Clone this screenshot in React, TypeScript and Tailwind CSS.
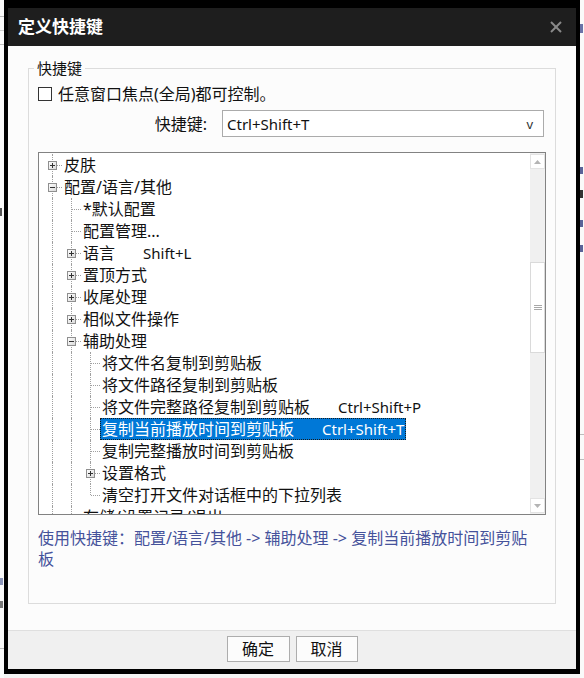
import React from 'react';

type Row = {
  level: number;
  text: string;
  exp?: '+' | '-';
  last?: boolean;
  sc?: string;
  sel?: boolean;
};

const rows: Row[] = [
  { level: 0, text: '皮肤', exp: '+' },
  { level: 0, text: '配置/语言/其他', exp: '-' },
  { level: 1, text: '*默认配置' },
  { level: 1, text: '配置管理...' },
  { level: 1, text: '语言', exp: '+', sc: 'Shift+L' },
  { level: 1, text: '置顶方式', exp: '+' },
  { level: 1, text: '收尾处理', exp: '+' },
  { level: 1, text: '相似文件操作', exp: '+' },
  { level: 1, text: '辅助处理', exp: '-' },
  { level: 2, text: '将文件名复制到剪贴板' },
  { level: 2, text: '将文件路径复制到剪贴板' },
  { level: 2, text: '将文件完整路径复制到剪贴板', sc: 'Ctrl+Shift+P' },
  { level: 2, text: '复制当前播放时间到剪贴板', sc: 'Ctrl+Shift+T', sel: true },
  { level: 2, text: '复制完整播放时间到剪贴板' },
  { level: 2, text: '设置格式', exp: '+' },
  { level: 2, text: '清空打开文件对话框中的下拉列表', last: true },
  { level: 1, text: '存储/设置记录/退出' },
];

function Expander({ kind }: { kind: '+' | '-' }) {
  return (
    <svg
      className="absolute left-[5px] top-[7px]"
      width="9"
      height="9"
      viewBox="0 0 9 9"
    >
      <defs>
        <linearGradient id="expg" x1="0" y1="0" x2="1" y2="1">
          <stop offset="0" stopColor="#ffffff" />
          <stop offset="1" stopColor="#d8d8d8" />
        </linearGradient>
      </defs>
      <rect x="0.5" y="0.5" width="8" height="8" fill="url(#expg)" stroke="#8f8f8f" />
      <line x1="2" y1="4.5" x2="7" y2="4.5" stroke="#333" strokeWidth="1" />
      {kind === '+' && <line x1="4.5" y1="2" x2="4.5" y2="7" stroke="#333" strokeWidth="1" />}
    </svg>
  );
}

function TreeRow({ r }: { r: Row }) {
  const guides = [];
  for (let k = 0; k < r.level; k++) {
    guides.push(
      <div key={k} className="relative h-full w-[19px] shrink-0">
        <div className="absolute left-[9px] top-0 h-full border-l border-dotted border-[#a0a0a0]" />
      </div>
    );
  }
  return (
    <div className="flex h-[22px] items-center whitespace-nowrap">
      {guides}
      <div className="relative h-full w-[19px] shrink-0">
        <div
          className={`absolute left-[9px] top-0 border-l border-dotted border-[#a0a0a0] ${
            r.last ? 'h-[11px]' : 'h-full'
          }`}
        />
        <div className="absolute left-[10px] top-[11px] w-[9px] border-t border-dotted border-[#a0a0a0]" />
        {r.exp && <Expander kind={r.exp} />}
      </div>
      <span
        className={`flex h-[22px] items-center px-[2px] ${
          r.sel
            ? 'bg-[#0078d7] text-white outline-1 outline-dotted outline-[#1a1a1a] -outline-offset-1'
            : 'text-[#111]'
        }`}
      >
        <span>{r.text}</span>
        {r.sc && <span className="ml-[28px] text-[15px]">{r.sc}</span>}
      </span>
    </div>
  );
}

export default function App() {
  return (
    <div className="flex h-[678px] w-[584px] overflow-hidden bg-[#f4f4f4] font-['Noto_Sans','Noto_Sans_CJK_SC',sans-serif]">
      {/* left background strip */}
      <div className="flex h-full w-[4px] shrink-0 flex-col bg-[#fafafa]">
        <div className="mt-[16px] h-px bg-[#bdbdbd]" />
        <div className="mt-[13px] h-px bg-[#cfcfcf]" />
        <div className="mt-[13px] h-px bg-[#bdbdbd]" />
        <div className="mt-[163px] h-[8px] w-[2px] bg-[#555]" />
        <div className="mt-[362px] h-[7px] w-[3px] bg-[#8a94b8]" />
        <div className="mt-[16px] h-[7px] w-[3px] bg-[#777]" />
        <div className="mt-[40px] h-px bg-[#bdbdbd]" />
      </div>

      {/* dialog frame */}
      <div className="flex h-[674px] w-[576px] shrink-0 flex-col bg-black pb-[5px] pl-[4px] pr-[4px] pt-[8px]">
        <div className="flex h-full w-full flex-col">
          {/* title bar */}
          <div className="flex h-[38px] shrink-0 items-center justify-between bg-[#1e1e1e] pl-[10px] pr-[14px]">
            <span className="text-[17px] font-bold leading-[20px] text-white">定义快捷键</span>
            <svg width="12" height="12" viewBox="0 0 12 12">
              <line x1="1" y1="1" x2="11" y2="11" stroke="#8a8a8a" strokeWidth="2" />
              <line x1="11" y1="1" x2="1" y2="11" stroke="#8a8a8a" strokeWidth="2" />
            </svg>
          </div>

          {/* body */}
          <div className="h-[584px] shrink-0 bg-[#fcfcfc] pt-[12px]">
            <fieldset className="mx-[20px] h-[546px] border border-[#dcdcdc]">
              <legend className="ml-[5px] px-[3px] text-[15px] leading-[20px] text-[#111]">快捷键</legend>
              <div className="px-[9px] pt-[6px]">
                {/* checkbox row */}
                <div className="flex h-[20px] items-center">
                  <div className="h-[14px] w-[14px] shrink-0 border border-[#333] bg-white" />
                  <span className="ml-[6px] text-[16px] leading-[20px] text-[#111]">
                    任意窗口焦点(全局)都可控制。
                  </span>
                </div>

                {/* combo row */}
                <div className="mt-[6px] flex h-[27px] items-center">
                  <div className="w-[169px] shrink-0 text-right text-[16px] leading-[20px] text-[#111]">快捷键:</div>
                  <div className="ml-[15px] flex h-[27px] w-[322px] items-center justify-between border border-[#ababab] bg-white pl-[4px] pr-[10px]">
                    <span className="text-[15px] leading-[20px] text-[#111]">Ctrl+Shift+T</span>
                    <span className="text-[13px] leading-[16px] text-[#333]">v</span>
                  </div>
                </div>

                {/* tree */}
                <div className="mt-[15px] flex h-[363px] border border-[#828282] bg-white">
                  <div className="min-w-0 flex-1 overflow-hidden pl-[4px] pt-[1px] text-[16px] leading-[22px]">
                    {rows.map((r, i) => (
                      <TreeRow key={i} r={r} />
                    ))}
                  </div>
                  {/* scrollbar */}
                  <div className="flex w-[15px] shrink-0 flex-col bg-[#f0f0f0] py-[1px]">
                    <div className="flex h-[15px] items-center justify-center border border-[#e3e3e3] bg-white">
                      <svg width="7" height="4" viewBox="0 0 7 4">
                        <polygon points="0,4 3.5,0 7,4" fill="#b4b4b4" />
                      </svg>
                    </div>
                    <div className="flex-1">
                      <div className="mt-[93px] flex h-[91px] items-center justify-center border border-[#dadada] bg-white">
                        <svg width="8" height="5" viewBox="0 0 8 5">
                          <line x1="0" y1="0.5" x2="8" y2="0.5" stroke="#a8a8a8" />
                          <line x1="0" y1="2.5" x2="8" y2="2.5" stroke="#a8a8a8" />
                          <line x1="0" y1="4.5" x2="8" y2="4.5" stroke="#a8a8a8" />
                        </svg>
                      </div>
                    </div>
                    <div className="flex h-[15px] items-center justify-center border border-[#e3e3e3] bg-white">
                      <svg width="7" height="4" viewBox="0 0 7 4">
                        <polygon points="0,0 3.5,4 7,0" fill="#b4b4b4" />
                      </svg>
                    </div>
                  </div>
                </div>

                {/* status */}
                <div className="mt-[13px] text-[16px] leading-[21px] text-[#45529b]">
                  使用快捷键：配置/语言/其他 -&gt; 辅助处理 -&gt; 复制当前播放时间到剪贴
                  <br />板
                </div>
              </div>
            </fieldset>
          </div>

          {/* footer */}
          <div className="flex flex-1 justify-center gap-[6px] border-t border-[#dfdfdf] bg-[#f0f0f0] pt-[5px]">
            <button className="h-[26px] w-[63px] border border-[#adadad] bg-[#fcfcfc] text-[16px] leading-[20px] text-[#111]">
              确定
            </button>
            <button className="h-[26px] w-[62px] border border-[#adadad] bg-[#fcfcfc] text-[16px] leading-[20px] text-[#111]">
              取消
            </button>
          </div>
        </div>
      </div>

      {/* right background strip */}
      <div className="flex h-full w-[4px] shrink-0 flex-col bg-[#fafafa]">
        <div className="mt-[24px] h-[9px] w-[3px] bg-[#6a73a8]" />
        <div className="mt-[134px] h-[7px] w-[3px] bg-[#5a6398]" />
        <div className="mt-[16px] h-[8px] w-[3px] bg-[#333]" />
        <div className="mt-[22px] h-[7px] w-[3px] bg-[#5a6398]" />
        <div className="mt-[18px] h-[7px] w-[3px] bg-[#5a6398]" />
        <div className="mt-[182px] h-px bg-[#bdbdbd]" />
        <div className="mt-[24px] h-px bg-[#bdbdbd]" />
      </div>
    </div>
  );
}
